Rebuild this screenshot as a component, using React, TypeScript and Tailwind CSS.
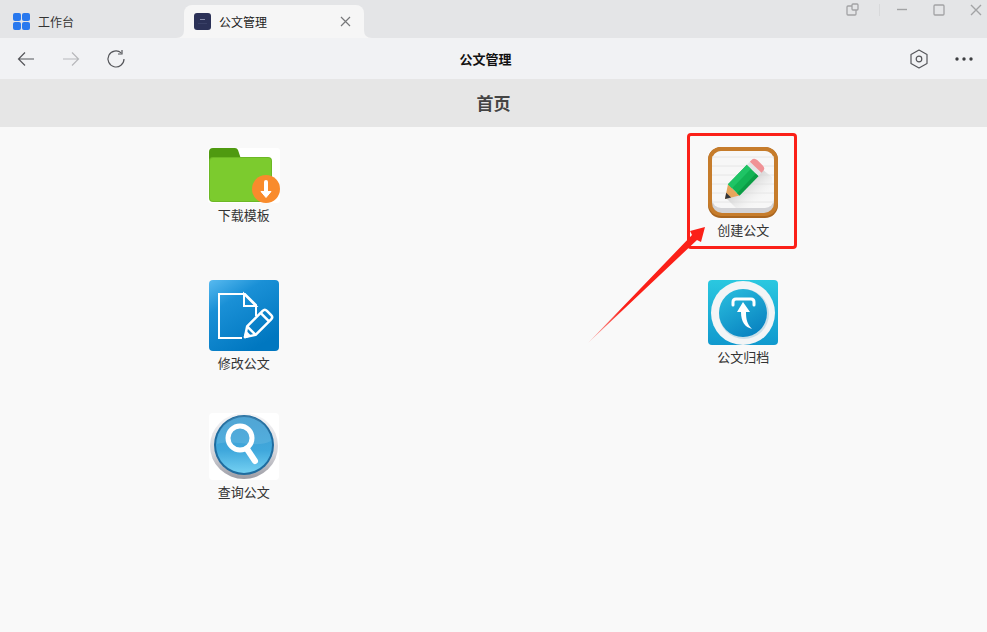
import type { ReactNode } from 'react'

interface Entry {
  label: string
  icon: ReactNode
  highlighted?: boolean
}

function FolderIcon() {
  return (
    <svg width="72" height="56" viewBox="0 -1 72 56" aria-hidden="true">
      <rect width="72" height="55" rx="3" fill="#fff" />
      <path d="M1 12V4q0-4 4-4h22q2 0 3 2l3 9v6H1z" fill="#4f9a10" />
      <rect x="1" y="9" width="63" height="45" rx="4" fill="#6cb825" />
      <rect x="2" y="10" width="61" height="43" rx="3" fill="#7ccb2e" />
      <circle cx="58" cy="41" r="14" fill="#f98b2c" />
      <path d="M58 34v12" stroke="#fff" strokeWidth="4" strokeLinecap="round" />
      <path d="M53 43.500h10l-5 6z" fill="#fff" stroke="#fff" strokeLinejoin="round" />
    </svg>
  )
}

function CreateIcon() {
  return (
    <svg width="72" height="71" viewBox="0 0 72 71" aria-hidden="true">
      <defs>
        <linearGradient id="shade" x1="0" y1="0" x2="1" y2="1">
          <stop offset="0.3" stopColor="#c4c4c4" />
          <stop offset="0.8" stopColor="#f4f4f4" stopOpacity="0" />
        </linearGradient>
      </defs>
      <rect x="1" width="70" height="71" rx="13" fill="#a9651f" />
      <rect x="1" width="70" height="69" rx="13" fill="#c67c2b" />
      <rect x="5" y="4" width="62" height="62" rx="10" fill="#d3d3d6" />
      <rect x="5" y="4" width="62" height="57" rx="9" fill="#f7f7f7" />
      <path d="M5 10h62M5 19h62M5 28h62M5 37h62M5 46h62M5 55h62" stroke="#e6e6e6" />
      <path d="M20 52l36-29 9 7v14L48 61H29z" fill="url(#shade)" />
      <g transform="translate(18 52) rotate(-46) scale(1.050 1.150)">
        <path d="M0 0l12-7v14z" fill="#e7a65c" />
        <path d="M0 0l5-3v6z" fill="#32363b" />
        <path d="M12-7h26V7H12z" fill="#12b354" />
        <path d="M12-7h26v5H12z" fill="#1fc465" />
        <path d="M12 4h26v3H12z" fill="#0b9c45" />
        <path d="M38-7h4V7h-4z" fill="#e3e5e7" />
        <path d="M42-7h2q4 0 4 4v6q0 4-4 4h-2z" fill="#f09296" />
      </g>
    </svg>
  )
}

function EditIcon() {
  return (
    <svg width="72" height="71" viewBox="0 0 72 71" aria-hidden="true">
      <defs>
        <linearGradient id="edit" x1="0" y1="0" x2="0.6" y2="1">
          <stop offset="0" stopColor="#58baf0" />
          <stop offset="0.35" stopColor="#1a90d6" />
          <stop offset="1" stopColor="#0077c0" />
        </linearGradient>
      </defs>
      <rect x="1" width="70" height="71" rx="4" fill="url(#edit)" />
      <g fill="none" stroke="#fff" strokeWidth="2">
        <path d="M34 58H11V14h26l11 11v11" />
        <path d="M36 14v12h12z" />
      </g>
      <g transform="translate(37 57) rotate(-45)" fill="none" stroke="#fff" strokeWidth="2.500" strokeLinejoin="round">
        <path d="M0 0l9-6h22q3 0 3 3v6q0 3-3 3H9z" />
        <path d="M9-6V6M28-6V6" />
        <path d="M0 0l4-2v4z" fill="#fff" />
      </g>
    </svg>
  )
}

function ArchiveIcon() {
  return (
    <svg width="72" height="65" viewBox="0 0 72 65" aria-hidden="true">
      <defs>
        <linearGradient id="tile" x1="0" y1="0" x2="0" y2="1">
          <stop offset="0" stopColor="#2ac8e0" />
          <stop offset="1" stopColor="#1099ce" />
        </linearGradient>
        <linearGradient id="disc" x1="0" y1="0" x2="0.6" y2="1">
          <stop offset="0" stopColor="#2bc0df" />
          <stop offset="1" stopColor="#0a85c2" />
        </linearGradient>
      </defs>
      <rect x="1" width="70" height="65" rx="4" fill="url(#tile)" />
      <circle cx="36" cy="33" r="32" fill="#f3f5f6" />
      <circle cx="37" cy="34" r="25" fill="#cbdfe8" />
      <circle cx="36" cy="33" r="24" fill="url(#disc)" />
      <path d="M26 25v-3q0-3 3-3h15q3 0 3 3v3" fill="none" stroke="#fff" strokeWidth="3" strokeLinecap="round" />
      <path d="M36 22l7 10h-4c0 7 1 12 6 17-7-2-11-7-11-17h-4z" fill="#fff" />
    </svg>
  )
}

function SearchIcon() {
  return (
    <svg width="72" height="67" viewBox="0 0 72 67" aria-hidden="true">
      <defs>
        <linearGradient id="rim" x1="0" y1="0" x2="0" y2="1">
          <stop offset="0" stopColor="#f5f5f7" />
          <stop offset="0.6" stopColor="#d5d5da" />
          <stop offset="1" stopColor="#9b9ba3" />
        </linearGradient>
        <linearGradient id="ball" x1="0" y1="0" x2="0" y2="1">
          <stop offset="0" stopColor="#3d9bd0" />
          <stop offset="0.6" stopColor="#40a8dc" />
          <stop offset="1" stopColor="#74d0f2" />
        </linearGradient>
      </defs>
      <rect x="1" width="70" height="67" rx="4" fill="#fff" />
      <ellipse cx="36" cy="33" rx="34" ry="33" fill="url(#rim)" />
      <circle cx="36" cy="32" r="30" fill="#1f6c9f" />
      <circle cx="36" cy="32" r="28" fill="url(#ball)" />
      <path d="M9 31a27 27 0 0154-3C49 36 26 26 9 31z" fill="#fff" opacity="0.1" />
      <circle cx="32" cy="25" r="12" fill="none" stroke="#fff" strokeWidth="5" />
      <path d="M39 36l8 12" stroke="#fff" strokeWidth="6" strokeLinecap="round" />
    </svg>
  )
}

const entries: Entry[] = [
  { label: '下载模板', icon: <FolderIcon /> },
  { label: '创建公文', icon: <CreateIcon />, highlighted: true },
  { label: '修改公文', icon: <EditIcon /> },
  { label: '公文归档', icon: <ArchiveIcon /> },
  { label: '查询公文', icon: <SearchIcon /> },
]

// red frame and arrow that point out one entry
function Highlight() {
  return (
    <>
      <span className="pointer-events-none absolute -top-[14px] -right-[18px] -bottom-[10px] -left-5 rounded-sm border-3 border-[#fb2018]" />
      <svg className="pointer-events-none absolute top-20 -left-[119px]" width="118" height="118" viewBox="0 0 118 118" aria-hidden="true">
        <defs>
          <linearGradient id="tail" x1="0" y1="1" x2="1" y2="0">
            <stop offset="0" stopColor="#fb2018" stopOpacity="0.3" />
            <stop offset="0.3" stopColor="#fb2018" />
          </linearGradient>
        </defs>
        <path d="M0 116L104 8l-2-4 15-4-4 15-4-2z" fill="url(#tail)" />
      </svg>
    </>
  )
}

function TabBar() {
  return (
    <div className="flex h-[38px] items-end bg-[#e4e5e7]">
      <button type="button" className="flex h-[33px] w-46 items-center gap-2 pl-[13px] text-xs text-[#333]">
        <svg width="17" height="17" viewBox="0 0 17 17" fill="#2878ee" aria-hidden="true">
          <rect width="8" height="8" rx="2" />
          <rect x="9" width="8" height="8" rx="2" />
          <rect y="9" width="8" height="8" rx="2" />
          <rect x="9" y="9" width="8" height="8" rx="2" />
        </svg>
        工作台
      </button>
      <div className="relative flex h-[33px] w-[180px] items-center rounded-t-lg bg-[#f6f6f6] pr-3 pl-[10px]">
        <svg className="absolute bottom-0 -left-2" width="8" height="8" viewBox="0 0 8 8" fill="#f6f6f6" aria-hidden="true"><path d="M8 0v8H0q8 0 8-8z" /></svg>
        <svg className="absolute -right-2 bottom-0" width="8" height="8" viewBox="0 0 8 8" fill="#f6f6f6" aria-hidden="true"><path d="M0 0v8h8Q0 8 0 0z" /></svg>
        <button type="button" className="flex flex-1 items-center gap-2 text-xs text-[#222]">
          <svg width="17" height="17" viewBox="0 0 17 17" aria-hidden="true">
            <rect width="17" height="17" rx="3" fill="#2b3157" />
            <path d="M6 6.500h5" stroke="#8a8fac" />
            <path d="M4 10.500h9" stroke="#394066" />
          </svg>
          公文管理
        </button>
        <button type="button" aria-label="关闭标签">
          <svg width="13" height="13" viewBox="0 0 13 13" stroke="#77787a" strokeWidth="1.200" aria-hidden="true"><path d="M2 2l9 9M11 2l-9 9" /></svg>
        </button>
      </div>
      <div className="ml-auto flex h-5 items-center self-start pr-1 text-[#a2a3a5]">
        <button type="button" aria-label="弹出窗口">
          <svg width="14" height="14" viewBox="0 0 14 14" fill="none" stroke="currentColor" strokeWidth="1.300" aria-hidden="true">
            <path d="M7 3H3Q2 3 2 4v7q0 1 1 1h7q1 0 1-1V7" />
            <rect x="7" y="1" width="6" height="6" rx="1" />
          </svg>
        </button>
        <span className="mr-[15px] ml-5 h-3 w-px bg-[#d8d9db]" />
        <button type="button" aria-label="最小化">
          <svg width="14" height="14" viewBox="0 0 14 14" stroke="currentColor" strokeWidth="1.400" aria-hidden="true"><path d="M2 6.500h10" /></svg>
        </button>
        <button type="button" aria-label="最大化" className="mx-[23px]">
          <svg width="14" height="14" viewBox="0 0 14 14" fill="none" stroke="currentColor" strokeWidth="1.300" aria-hidden="true"><rect x="2" y="2" width="10" height="10" rx="1" /></svg>
        </button>
        <button type="button" aria-label="关闭">
          <svg width="14" height="14" viewBox="0 0 14 14" stroke="currentColor" strokeWidth="1.400" aria-hidden="true"><path d="M2 2l10 10M12 2L2 12" /></svg>
        </button>
      </div>
    </div>
  )
}

function Toolbar() {
  return (
    <div className="grid h-[41px] grid-cols-[1fr_auto_1fr] items-center bg-[#f1f2f4] px-4 text-[#55565a]">
      <div className="flex items-center gap-[25px]">
        <button type="button" aria-label="后退">
          <svg width="20" height="20" viewBox="0 0 20 20" fill="none" stroke="currentColor" strokeWidth="1.200" aria-hidden="true"><path d="M9 3.500L2.500 10 9 16.500M2.500 10H18" /></svg>
        </button>
        <button type="button" aria-label="前进" className="text-[#b7b8bb]">
          <svg width="20" height="20" viewBox="0 0 20 20" fill="none" stroke="currentColor" strokeWidth="1.200" aria-hidden="true"><path d="M11 3.500l6.500 6.500-6.500 6.500M17.500 10H2" /></svg>
        </button>
        <button type="button" aria-label="刷新">
          <svg width="20" height="20" viewBox="0 0 20 20" fill="none" stroke="currentColor" strokeWidth="1.200" aria-hidden="true">
            <path d="M18 10a8 8 0 11-2.800-6.100" />
            <path d="M16 1v4h-4" />
          </svg>
        </button>
      </div>
      <h1 className="mr-4 text-[13px] font-bold text-[#111]">公文管理</h1>
      <div className="flex items-center justify-end gap-[26px]">
        <button type="button" aria-label="设置">
          <svg width="20" height="20" viewBox="0 0 20 20" fill="none" stroke="currentColor" strokeWidth="1.200" strokeLinejoin="round" aria-hidden="true">
            <path d="M10 1l8 4.500v9L10 19l-8-4.500v-9z" />
            <circle cx="10" cy="10" r="2.800" />
          </svg>
        </button>
        <button type="button" aria-label="更多">
          <svg className="overflow-visible" width="16" height="20" viewBox="0 0 16 20" fill="#3d3e41" aria-hidden="true">
            <circle cx="2" cy="10" r="1.700" />
            <circle cx="9" cy="10" r="1.700" />
            <circle cx="16" cy="10" r="1.700" />
          </svg>
        </button>
      </div>
    </div>
  )
}

export default function App() {
  return (
    <div className="min-h-screen bg-[#f9f9f9] font-['Noto_Sans_CJK_SC',sans-serif]">
      <TabBar />
      <Toolbar />
      <h2 className="flex h-12 items-center justify-center bg-[#e6e6e6] text-[17px] font-bold text-[#444]">首页</h2>
      <main className="grid auto-rows-[133px] grid-cols-2 gap-x-3 pt-5">
        {entries.map((entry) => (
          <div key={entry.label} className="flex items-start justify-center">
            <a href="#" className="relative flex w-18 flex-col items-center gap-[3px] text-[13px] leading-[18px] text-[#333]">
              {entry.icon}
              <span>{entry.label}</span>
              {entry.highlighted ? <Highlight /> : null}
            </a>
          </div>
        ))}
      </main>
    </div>
  )
}
